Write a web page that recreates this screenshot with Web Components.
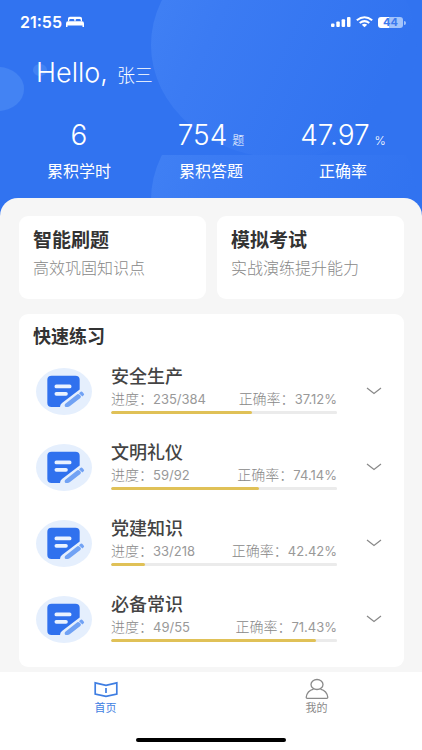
<!DOCTYPE html>
<html lang="zh-CN">
<head>
<meta charset="utf-8">
<meta name="viewport" content="width=device-width, initial-scale=1">
<title>首页</title>
<style>
html, body { margin: 0; }
body { font-family: Inter, "Noto Sans CJK SC", sans-serif; background: #f6f6f6; color: #333; }
</style>
</head>
<body>
<study-app></study-app>
<script>
const define = (name, html) => customElements.define(name, class extends HTMLElement {
  connectedCallback() {
    if (this.shadowRoot) return;
    const t = document.createElement('template');
    t.innerHTML = typeof html === 'function' ? html(this) : html;
    this.attachShadow({ mode: 'open' }).append(t.content.cloneNode(true));
  }
});

define('status-bar', `
<style>
:host { display: flex; align-items: center; justify-content: space-between; height: 44px; padding: 0 19px 0 20px; color: #fff; }
div { display: flex; align-items: center; gap: 4px; }
.right { gap: 5px; }
time { font-size: 16px; line-height: 20px; font-weight: 600; }
svg { display: block; }
.battery { position: relative; width: 25px; height: 11px; border-radius: 3px; background: linear-gradient(90deg, #fff 11px, #a3c4fb 11px); color: #3b79ee; font-size: 11px; line-height: 11px; font-weight: 700; justify-content: center; }
.battery::after { content: ""; position: absolute; left: 26px; top: 4px; width: 2px; height: 4px; border-radius: 0 2px 2px 0; background: #a3c4fb; }
</style>
<div><time>21:55</time>
<svg width="18" height="12" viewBox="0 0 18 12" fill="#fff" aria-hidden="true"><path d="M2 5.200V2.500Q2 .8 4 .8h10q2 0 2 1.700V5.200h-1.200V4.300Q14.800 3 13.500 3h-2.700Q9.600 3 9.600 4.300V5.200H8.400V4.300Q8.400 3 7.200 3H4.500Q3.200 3 3.200 4.300V5.200z"/><path d="M0 7.500Q0 5.200 2 5.200h14q2 0 2 2.300V11h-1.500V9.500h-15V11H0z"/></svg></div>
<div class="right">
<svg width="20" height="12" viewBox="0 0 20 12" fill="#fff" aria-hidden="true"><rect y="7.500" width="3.500" height="3.500" rx="1"/><rect x="5.300" y="5.500" width="3.500" height="5.500" rx="1"/><rect x="10.600" y="3.200" width="3.500" height="7.800" rx="1"/><rect x="16" y="1" width="3.500" height="10" rx="1"/></svg>
<svg width="17" height="12" viewBox="0 0 17 12" fill="none" stroke="#fff" stroke-width="2" aria-hidden="true"><path d="M.8 4.300Q8.500-1.800 16.200 4.300M3.700 7Q8.500 3.200 13.300 7"/><path d="M5.800 8.700Q8.500 6.700 11.200 8.700L8.500 11.200z" fill="#fff" stroke="none"/></svg>
<div class="battery">44</div></div>`);

define('stat-item', el => `
<style>
:host { display: flex; flex-direction: column; align-items: center; gap: 6px; color: #fff; }
.value { display: flex; align-items: baseline; gap: 5px; font-size: 28px; line-height: 36px; font-weight: 300; white-space: nowrap; }
small { font-size: 12px; line-height: 16px; }
.label { font-size: 16px; line-height: 24px; font-weight: 400; }
</style>
<div class="value"><span>${el.getAttribute('value')}</span>${el.hasAttribute('unit') ? `<small>${el.getAttribute('unit')}</small>` : ''}</div>
<div class="label"><slot></slot></div>`);

define('hero-header', `
<style>
:host { display: block; position: relative; overflow: hidden; background: #3173f0; color: #fff; padding-bottom: 35px; }
.art { position: absolute; inset: 0; width: 100%; height: 100%; }
.content { position: relative; }
h1 { display: flex; align-items: baseline; gap: 9px; margin: 0; padding: 13px 36px 0; font-size: 27px; line-height: 32px; font-weight: 300; }
h1 span { font-size: 18px; line-height: 24px; font-weight: 300; }
.stats { display: grid; grid-template-columns: repeat(3, 1fr); padding: 28px 13px 0; }
</style>
<svg class="art" viewBox="0 0 422 218" preserveAspectRatio="none" aria-hidden="true">
<defs>
<linearGradient id="fade" x1="0" y1="0" x2="1" y2=".4"><stop offset="0" stop-color="#4282f4"/><stop offset=".35" stop-color="#3b7bf3"/><stop offset="1" stop-color="#3173f0"/></linearGradient>
<pattern id="bubbles" width="422" height="155" patternUnits="userSpaceOnUse">
<ellipse cx="284" cy="45" rx="133" ry="113" fill="url(#fade)"/>
<ellipse cx="-2" cy="89" rx="26" ry="22" fill="#4383f3"/>
<ellipse cx="40" cy="70" rx="7" ry="6" fill="#4383f3"/>
</pattern></defs>
<rect width="422" height="218" fill="url(#bubbles)"/></svg>
<div class="content">
<status-bar></status-bar>
<h1>Hello, <span>张三</span></h1>
<div class="stats"><stat-item value="6">累积学时</stat-item><stat-item value="754" unit="题">累积答题</stat-item><stat-item value="47.97" unit="%">正确率</stat-item></div>
</div>`);

define('mode-card', `
<style>
:host { display: block; }
a { display: block; padding: 12px 14px 19px; border-radius: 9px; background: #fff; color: inherit; text-decoration: none; }
h2 { margin: 0; font-size: 19px; line-height: 26px; font-weight: 600; }
p { margin: 2px 0 0; font-size: 16px; line-height: 24px; font-weight: 300; color: #888; white-space: nowrap; }
</style>
<a href="#"><h2><slot name="title"></slot></h2><p><slot></slot></p></a>`);

define('practice-row', el => `
<style>
:host { display: grid; grid-template-columns: 56px minmax(0, 1fr) 16px; align-items: center; height: 76px; padding: 0 22px 0 17px; }
svg { display: block; }
.main { padding: 0 29px 4px 19px; display: flex; flex-direction: column; }
h3 { margin: 0 0 1px; font-size: 18px; line-height: 24px; font-weight: 500; color: #444; }
.meta { display: flex; justify-content: space-between; margin-bottom: 3px; font-size: 14px; line-height: 18px; font-weight: 300; color: #888; white-space: nowrap; }
.meta b { font-size: 13px; font-weight: 400; color: #999; }
progress { appearance: none; -webkit-appearance: none; display: block; width: 100%; height: 3px; border: 0; border-radius: 2px; overflow: hidden; background: #ebebeb; }
progress::-webkit-progress-bar { background: #ebebeb; border-radius: 2px; }
progress::-webkit-progress-value { background: #e0c157; border-radius: 2px; }
button { display: block; width: 16px; height: 24px; padding: 0; border: 0; background: none; }
</style>
<svg width="56" height="47" viewBox="51 40 168 140" preserveAspectRatio="none" aria-hidden="true">
<ellipse cx="135" cy="110" rx="84" ry="70" fill="#e5effd"/>
<path d="M98 63H169Q182 63 182 75V104L129 144Q123 149 123 156H98Q85 156 85 144V75Q85 63 98 63Z" fill="#3071ee"/>
<path d="M112 95H152M112 117H141" stroke="#eaf2ff" stroke-width="11" stroke-linecap="round"/>
<path d="M140 146L175 118Q178 116 181 119L185 123Q187 126 184 129L152 154Q149 156 146 156H140Q137 156 137 152Q137 148 140 146Z" fill="#71a2f4"/>
<path d="M180 115L185 111Q188 109 191 112L194 116Q197 119 194 121L190 125Z" fill="#71a2f4"/>
</svg>
<div class="main"><h3><slot></slot></h3>
<div class="meta"><span>进度：<b>${el.getAttribute('done')}</b></span><span>正确率：<b>${el.getAttribute('rate')}</b></span></div>
<progress max="1000" value="${el.getAttribute('fill')}" aria-label="进度"></progress></div>
<button type="button" aria-label="展开"><svg width="16" height="24" viewBox="0 0 16 24" fill="none" stroke="#888" stroke-width="1.200" aria-hidden="true"><path d="M1 9L8 14.500L15 9"/></svg></button>`);

define('practice-panel', `
<style>
:host { display: block; background: #fff; border-radius: 9px; padding: 10px 0 10px; }
h2 { margin: 0 0 3px; padding: 0 14px; font-size: 18px; line-height: 26px; font-weight: 600; }
</style>
<h2><slot name="title"></slot></h2><slot></slot>`);

define('tab-bar', `
<style>
:host { display: block; background: #fff; }
nav { display: grid; grid-template-columns: 1fr 1fr; padding-top: 6px; }
a { display: flex; flex-direction: column; align-items: center; color: #8a8a8a; font-size: 11px; line-height: 16px; text-decoration: none; }
a[aria-current] { color: #3f7ee2; }
svg { display: block; }
.home { width: 150px; height: 4px; margin: 22px auto 0; border-radius: 2px; background: #000; }
.wrap { padding-bottom: 8px; }
</style>
<div class="wrap"><nav>
<a href="#" aria-current="page"><svg width="24" height="22" viewBox="0 0 24 22" fill="none" stroke="currentColor" stroke-width="1.700" aria-hidden="true"><path d="M1.200 4.800L12 7.300L22.800 4.800V16L12 18.300L1.200 16ZM12 10V15"/></svg>首页</a>
<a href="#"><svg width="24" height="22" viewBox="0 0 24 22" fill="none" stroke="currentColor" stroke-width="1.300" aria-hidden="true"><ellipse cx="12" cy="6.500" rx="6" ry="5"/><path d="M8.600 11.200Q2 13 1.200 19.300Q1.200 20.300 2.200 20.300H21.800Q22.800 20.300 22.800 19.300Q22 13 15.400 11.200"/></svg>我的</a>
</nav><div class="home"></div></div>`);

define('study-app', `
<style>
:host { display: flex; flex-direction: column; min-height: 100vh; }
main { position: relative; flex: 1; margin-top: -20px; padding: 18px 18px 5px 19px; border-radius: 18px 18px 0 0; background: #f6f6f6; display: flex; flex-direction: column; gap: 15px; }
.modes { display: grid; grid-template-columns: 1fr 1fr; gap: 11px; }
</style>
<hero-header></hero-header>
<main>
<div class="modes">
<mode-card><span slot="title">智能刷题</span>高效巩固知识点</mode-card>
<mode-card><span slot="title">模拟考试</span>实战演练提升能力</mode-card>
</div>
<practice-panel><span slot="title">快速练习</span>
<practice-row done="235/384" rate="37.12%" fill="624">安全生产</practice-row>
<practice-row done="59/92" rate="74.14%" fill="653">文明礼仪</practice-row>
<practice-row done="33/218" rate="42.42%" fill="152">党建知识</practice-row>
<practice-row done="49/55" rate="71.43%" fill="907">必备常识</practice-row>
</practice-panel>
</main>
<tab-bar></tab-bar>`);
</script>
</body>
</html>
